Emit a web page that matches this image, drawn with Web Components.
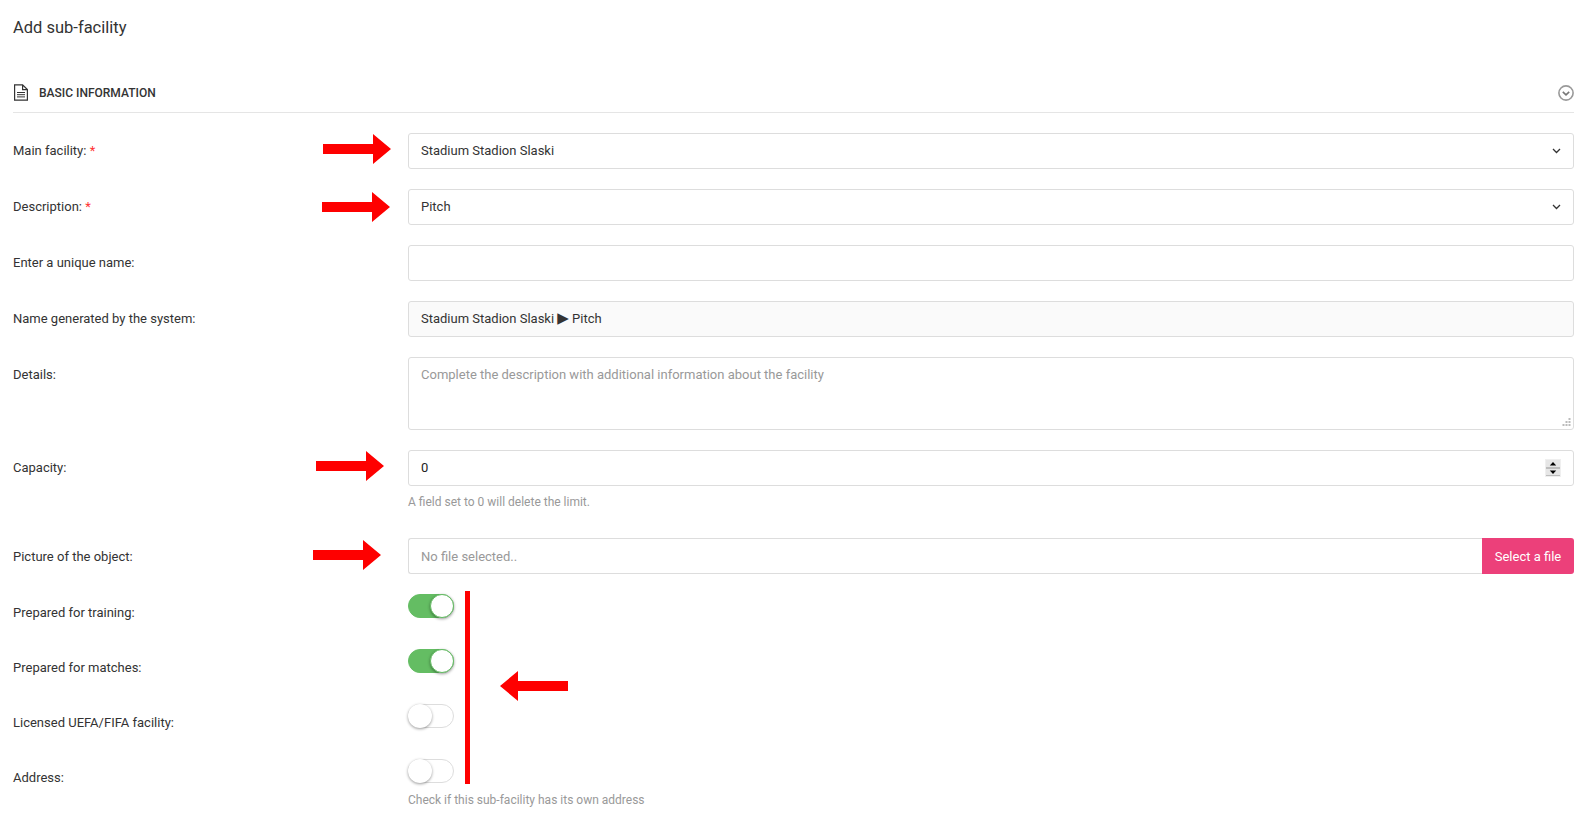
<!DOCTYPE html>
<html lang="en">
<head>
<meta charset="utf-8">
<title>Add sub-facility</title>
<style>
   html, body { margin: 0; padding: 0; background: #fff; overflow: hidden; }
   body { font: 13px/19.5px Roboto, "Liberation Sans", sans-serif; color: #333; }
</style>
</head>
<body>
<facility-page>
   <section-header slot="section">Basic information</section-header>

   <form-row>
      <span slot="label">Main facility: <span style="color:#f33">*</span></span>
      <select-box>Stadium Stadion Slaski</select-box>
   </form-row>
   <form-row>
      <span slot="label">Description: <span style="color:#f33">*</span></span>
      <select-box>Pitch</select-box>
   </form-row>
   <form-row>
      <span slot="label">Enter a unique name:</span>
      <text-box></text-box>
   </form-row>
   <form-row>
      <span slot="label">Name generated by the system:</span>
      <text-box readonly>Stadium Stadion Slaski <span style="font-family:'DejaVu Sans',sans-serif;font-size:15px;line-height:16px">▶</span> Pitch</text-box>
   </form-row>
   <form-row>
      <span slot="label">Details:</span>
      <area-box>Complete the description with additional information about the facility</area-box>
   </form-row>
   <form-row hint gap="27">
      <span slot="label">Capacity:</span>
      <number-box>0</number-box>
      <span slot="hint">A field set to 0 will delete the limit.</span>
   </form-row>
   <form-row compact>
      <span slot="label">Picture of the object:</span>
      <file-box button="Select a file">No file selected..</file-box>
   </form-row>
   <form-row compact>
      <span slot="label">Prepared for training:</span>
      <toggle-switch on></toggle-switch>
   </form-row>
   <form-row compact>
      <span slot="label">Prepared for matches:</span>
      <toggle-switch on></toggle-switch>
   </form-row>
   <form-row compact>
      <span slot="label">Licensed UEFA/FIFA facility:</span>
      <toggle-switch></toggle-switch>
   </form-row>
   <form-row compact hint gap="0">
      <span slot="label">Address:</span>
      <toggle-switch></toggle-switch>
      <span slot="hint">Check if this sub-facility has its own address</span>
   </form-row>

   <!-- annotations drawn on top of the screenshot -->
   <red-arrow slot="marks" x="323" y="134"></red-arrow>
   <red-arrow slot="marks" x="322" y="192"></red-arrow>
   <red-arrow slot="marks" x="316" y="451"></red-arrow>
   <red-arrow slot="marks" x="313" y="540"></red-arrow>
   <red-arrow slot="marks" x="500" y="671" left></red-arrow>
   <red-bar slot="marks"></red-bar>
</facility-page>

<script>
const boxStyle = `
   .box {
      box-sizing: border-box;
      height: 36px;
      padding: 7px 12px;
      border: 1px solid #ddd;
      border-radius: 3px;
      background: #fff;
      line-height: 20px;
      white-space: nowrap;
   }
`;

const define = (name, html, extra) => {
   const template = document.createElement('template');
   template.innerHTML = html;
   customElements.define(name, class extends HTMLElement {
      constructor() {
         super();
         const root = this.attachShadow({ mode: 'open' });
         root.appendChild(template.content.cloneNode(true));
      }
      connectedCallback() {
         if(extra) extra(this);
      }
   });
};

define('facility-page', `
<style>
   :host { display: block; position: relative; height: 819px; padding: 0 7px 0 13px; }
   h1 {
      margin: 0;
      padding-top: 18px;
      height: 55px;
      box-sizing: border-box;
      font-size: 16.5px;
      line-height: 20px;
      font-weight: 400;
   }
</style>
<h1>Add sub-facility</h1>
<slot name="section"></slot>
<slot></slot>
<slot name="marks"></slot>
`);

define('section-header', `
<style>
   :host {
      display: flex;
      align-items: center;
      box-sizing: border-box;
      height: 58px;
      padding-top: 18px;
      margin-bottom: 20px;
      border-bottom: 1px solid #e5e5e5;
      font-weight: 500;
      font-size: 12px;
      text-transform: uppercase;
   }
   .doc { width: 16px; height: 17px; margin-right: 10px; flex: none; }
   .title { flex: 1; padding-top: 2px; }
   .toggle { width: 16px; height: 16px; flex: none; }
</style>
<svg class="doc" viewBox="0 0 16 17" fill="none" stroke="#333" stroke-width="1.2">
   <path d="M1.6 .8H9.6L14.4 5.6V16.2H1.6Z M9.6 .8V5.6H14.4"/>
   <path d="M4 8.5H12 M4 10.7H12 M4 12.9H12" stroke-width="1"/>
</svg>
<span class="title"><slot></slot></span>
<svg class="toggle" viewBox="0 0 16 16" fill="none" stroke="#999" stroke-width="1.6">
   <circle cx="8" cy="8" r="7.1"/>
   <path d="M4.8 6.8L8 9.8L11.2 6.8" stroke="#777" stroke-width="1.6"/>
</svg>
`);

define('form-row', `
<style>
   :host { display: grid; grid-template-columns: 395px 1fr; margin-bottom: 20px; }
   :host([compact]) { min-height: 35px; }
   :host([gap="27"]) { margin-bottom: 27px; }
   :host([gap="0"]) { margin-bottom: 0; }
   .label { padding-top: 8px; }
   .hint { display: none; font-size: 12px; line-height: 18px; color: #999; margin-top: 7px; }
   :host([hint]) .hint { display: block; }
   :host([compact]) .hint { margin-top: 8px; }
   :host([compact]) .label { padding-top: 9px; }
</style>
<div class="label"><slot name="label"></slot></div>
<div><slot></slot><div class="hint"><slot name="hint"></slot></div></div>
`);

define('select-box', `
<style>
   :host { display: block; }
   ${boxStyle}
   .box { display: flex; justify-content: space-between; align-items: center; }
   svg { width: 9px; height: 6px; margin-right: 0; }
</style>
<div class="box"><span><slot></slot></span>
   <svg viewBox="0 0 9 6" fill="none" stroke="#333" stroke-width="1.3"><path d="M1 1L4.5 4.5L8 1"/></svg>
</div>
`);

define('text-box', `
<style>
   :host { display: block; }
   ${boxStyle}
   :host([readonly]) .box { background: #fafafa; }
</style>
<div class="box"><slot></slot></div>
`);

define('area-box', `
<style>
   :host { display: block; }
   ${boxStyle}
   .box { position: relative; height: 73px; color: #999; }
   svg { position: absolute; right: 2px; bottom: 2px; width: 9px; height: 9px; }
</style>
<div class="box"><slot></slot>
   <svg viewBox="0 0 9 9" fill="#bbb">
      <rect x="6.5" y="0" width="2" height="2"/>
      <rect x="3.5" y="3" width="2" height="2"/><rect x="6.5" y="3" width="2" height="2"/>
      <rect x="0.5" y="6" width="2" height="2"/><rect x="3.5" y="6" width="2" height="2"/><rect x="6.5" y="6" width="2" height="2"/>
   </svg>
</div>
`);

define('number-box', `
<style>
   :host { display: block; }
   ${boxStyle}
   .box { display: flex; justify-content: space-between; align-items: center; padding-right: 12px; color: #222; }
   svg { width: 16px; height: 18px; display: block; }
</style>
<div class="box"><span><slot></slot></span>
   <svg viewBox="0 0 16 18">
      <rect width="16" height="18" fill="#efefef"/>
      <rect x="1" y="1" width="14" height="7.5" fill="#e6e6e6"/>
      <rect x="1" y="9.5" width="14" height="7.5" fill="#e6e6e6"/>
      <path d="M1 8.5H15M1 9.5H15M1 16.5H15" stroke="#bdbdbd" fill="none"/>
      <path d="M8 3L11.2 6.5H4.8Z" fill="#000"/>
      <path d="M8 15L4.8 11.5H11.2Z" fill="#000"/>
   </svg>
</div>
`);

define('file-box', `
<style>
   :host { display: flex; }
   ${boxStyle}
   .box { flex: 1; padding-top: 8px; color: #999; border-right: 0; border-radius: 3px 0 0 3px; }
   .btn {
      box-sizing: border-box;
      width: 92px;
      height: 36px;
      padding: 9px 0;
      text-align: center;
      background: #ec407a;
      color: #fff;
      border-radius: 0 3px 3px 0;
   }
</style>
<div class="box"><slot></slot></div>
<div class="btn"></div>
`, el => {
   el.shadowRoot.querySelector('.btn').textContent = el.getAttribute('button');
});

define('toggle-switch', `
<style>
   :host { display: block; box-sizing: border-box; width: 46px; height: 24px; position: relative;
      border: 1px solid #ddd; border-radius: 12px; background: #fff; }
   :host([on]) { background: #64bd63; border-color: #64bd63; }
   i { position: absolute; top: -1px; left: -1px; width: 24px; height: 24px; box-sizing: border-box;
      border-radius: 50%; background: #fff; box-shadow: 0 1px 3px rgba(0,0,0,.4); }
   :host([on]) i { left: auto; right: -1px; border: 1px solid #64bd63; }
</style>
<i></i>
`);

define('red-arrow', `
<style>
   :host { display: block; position: absolute; width: 68px; height: 30px; }
   svg { display: block; width: 68px; height: 30px; }
   :host([left]) svg { transform: scaleX(-1); }
</style>
<svg viewBox="0 0 68 30"><path d="M0 10H50V0L68 15L50 30V20H0Z" fill="#fe0000"/></svg>
`, el => {
   el.style.left = el.getAttribute('x') + 'px';
   el.style.top = el.getAttribute('y') + 'px';
});

define('red-bar', `
<style>
   :host { display: block; position: absolute; left: 465px; top: 591px; width: 5px; height: 193px; background: #fe0000; }
</style>
`);
</script>
</body>
</html>
